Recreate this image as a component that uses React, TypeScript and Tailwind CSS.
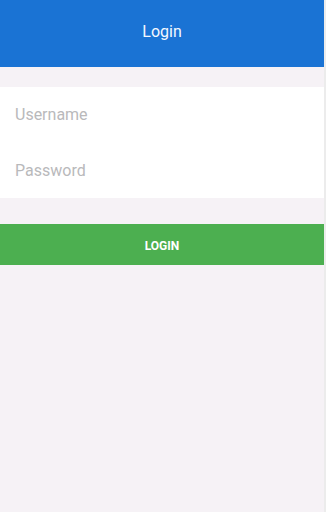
import React from "react";

export default function App() {
  return (
    <div className="flex h-[512px] w-[326px] bg-[#f7f5f8]" style={{ fontFamily: "Roboto, 'Noto Sans', sans-serif" }}>
      <div className="flex w-[324px] flex-col bg-[#f6f2f6]">
        <div className="flex h-[67px] items-center justify-center bg-[#1a73d4] pb-[4px] text-[16px] text-[#f4f8ff]">
          Login
        </div>
        <div className="mt-[20px] flex flex-col bg-white">
          <div className="flex h-[56px] items-center pl-[15px] text-[16px] text-[#b9b9bb]">Username</div>
          <div className="flex h-[55px] items-center pl-[15px] text-[16px] text-[#b9b9bb]">Password</div>
        </div>
        <div className="mt-[26px] flex h-[41px] items-center justify-center bg-[#4caf50] pt-[2px] text-[12px] font-bold text-white">
          LOGIN
        </div>
      </div>
      <div className="w-[2px] bg-[#ececec]" />
    </div>
  );
}
